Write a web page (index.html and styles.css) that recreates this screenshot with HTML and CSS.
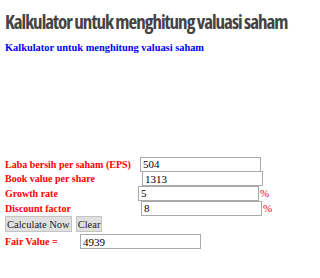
FILE: index.html
```html
<!DOCTYPE html>
<html lang="id">
<head>
  <meta charset="UTF-8" />
  <meta name="viewport" content="width=device-width, initial-scale=1.0"/>
  <title>Kalkulator untuk menghitung valuasi saham</title>
  <link rel="stylesheet" href="styles.css">
</head>
<body>
  <h1 class="title">Kalkulator untuk menghitung valuasi saham</h1>
  <h2 class="subtitle">Kalkulator untuk menghitung valuasi saham</h2>

  <form class="calc" onsubmit="return false;">
    <div class="row">
      <label for="eps">Laba bersih per saham (EPS)</label>
      <input class="field" type="text" id="eps" value="504">
    </div>
    <div class="row shift-2">
      <label for="bvps">Book value per share</label>
      <input class="field" type="text" id="bvps" value="1313">
    </div>
    <div class="row shift-m2">
      <label for="growth">Growth rate</label>
      <input class="field" type="text" id="growth" value="5"><span class="pct">%</span>
    </div>
    <div class="row shift-1">
      <label for="discount">Discount factor</label>
      <input class="field" type="text" id="discount" value="8"><span class="pct">%</span>
    </div>
    <div class="buttons">
      <button type="button" onclick="calculate()">Calculate Now</button>
      <button type="reset">Clear</button>
    </div>
    <div class="result">
      <label for="fair">Fair Value =</label>
      <input class="field" type="text" id="fair" value="4939">
    </div>
  </form>

  <script>
    function calculate() {
      const eps = parseFloat(document.getElementById('eps').value) || 0;
      const growth = parseFloat(document.getElementById('growth').value) || 0;
      const discount = parseFloat(document.getElementById('discount').value) || 0;
      const fair = eps * (8.5 + 2 * growth) * 4.4 / discount;
      document.getElementById('fair').value = Math.round(fair);
    }
  </script>
</body>
</html>
```

FILE: styles.css
```css
body {
  margin: 5px;
  background-color: #fff;
  font-family: "Liberation Serif", serif;
}

.title {
  font-family: "Open Sans", sans-serif;
  font-size: 19px;
  font-weight: 700;
  font-stretch: 75%;
  letter-spacing: -1px;
  white-space: nowrap;
  color: #444;
  margin: 4px 0 0;
  line-height: 26px;
}

.subtitle {
  font-size: 10.4px;
  font-weight: 700;
  color: #00f;
  margin: 6px 0 0;
  line-height: 13px;
}

.calc {
  margin-top: 103px;
  font-size: 10px;
}

.row,
.result {
  display: flex;
  align-items: center;
  height: 14.6px;
}

.row label,
.result label {
  color: #f00;
  font-weight: 700;
  white-space: nowrap;
  width: 135px;
}

.shift-2 label { width: 137px; }
.shift-m2 label { width: 133px; }
.shift-1 label { width: 136px; }

.field {
  width: 115px;
  height: 11px;
  padding: 1px 2px;
  border: 1px solid #aaa;
  font-family: "Liberation Serif", serif;
  font-size: 11px;
  color: #000;
}

.pct {
  color: #f00;
  font-size: 11px;
  margin-left: 1px;
}

.buttons {
  display: flex;
  gap: 4px;
  margin-top: 1px;
}

.buttons button {
  font-family: "Liberation Serif", serif;
  font-size: 10.5px;
  padding: 0 1px;
  height: 16px;
  background-color: #e0e0e0;
  border: 1px solid #c4c4c4;
  color: #222;
}

.result {
  margin-top: 2px;
}

.result label {
  width: 75px;
}
```
